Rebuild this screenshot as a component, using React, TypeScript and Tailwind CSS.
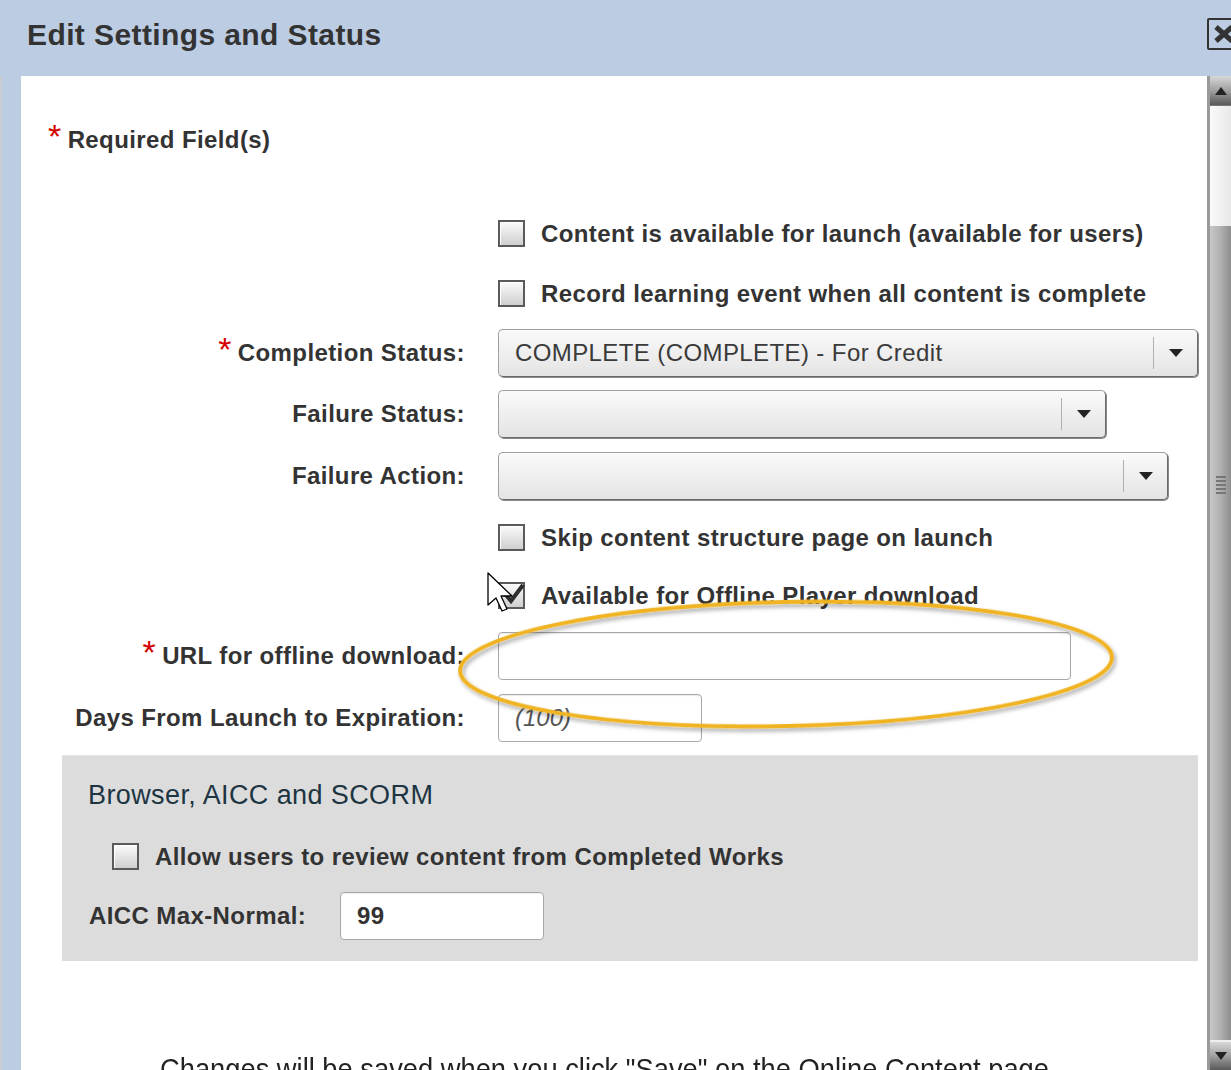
import React from "react";

const font = { fontFamily: '"Liberation Sans", Arial, sans-serif' };

function Checkbox({ checked = false }: { checked?: boolean }) {
  return (
    <div className="relative w-[27px] h-[27px] shrink-0 border-2 border-[#5a5a5a] bg-gradient-to-b from-[#fbfbfb] to-[#cfcfcf] shadow-[inset_1px_1px_0_#fff]">
      {checked && (
        <svg className="absolute left-[2px] top-[-2px]" width="24" height="24" viewBox="0 0 24 24">
          <path d="M4 13 L9 19 L21 3" fill="none" stroke="#2e2e2e" strokeWidth="4" strokeLinejoin="miter" />
        </svg>
      )}
    </div>
  );
}

function Select({ width, value = "" }: { width: string; value?: string }) {
  return (
    <div
      className={`${width} h-[48px] flex items-center rounded-[5px] border border-[#a0a0a0] border-b-[#6a6a6a] border-r-[#6a6a6a] bg-gradient-to-b from-[#fafafa] to-[#e4e4e4] shadow-[1px_1px_0_#8a8a8a]`}
    >
      <div className="flex-1 pl-[16px] text-[24px] tracking-[0.4px] text-[#3a3a3a] whitespace-nowrap overflow-hidden">{value}</div>
      <div className="w-[1px] h-[32px] bg-[#b0b0b0]" />
      <div className="w-[43px] flex items-center justify-center">
        <svg width="16" height="10" viewBox="0 0 16 10">
          <path d="M1 1 L15 1 L8 9 Z" fill="#222" />
        </svg>
      </div>
    </div>
  );
}

function TextInput({ width, children }: { width: string; children?: React.ReactNode }) {
  return (
    <div
      className={`${width} h-[48px] flex items-center rounded-[4px] border border-[#a8a8a8] bg-white shadow-[inset_0_1px_1px_rgba(0,0,0,0.08)]`}
    >
      {children}
    </div>
  );
}

function Star() {
  return (
    <span className="text-[#d40000] font-normal text-[34px] leading-[20px] h-[20px] mr-[6px] relative top-[-4px]">*</span>
  );
}

function Label({ children, req = false }: { children: React.ReactNode; req?: boolean }) {
  return (
    <div className="w-[444px] shrink-0 flex justify-end items-center text-[24px] tracking-[0.4px] leading-[28px] font-bold text-[#333] whitespace-nowrap">
      {req && <Star />}
      <span>{children}</span>
    </div>
  );
}

function CheckRow({ label, checked = false, mt }: { label: string; checked?: boolean; mt: string }) {
  return (
    <div className={`flex items-center h-[27px] ${mt}`}>
      <div className="w-[444px] shrink-0" />
      <div className="ml-[33px] flex items-center gap-[16px] text-[24px] tracking-[0.4px] leading-[27px] font-bold text-[#333] whitespace-nowrap">
        <Checkbox checked={checked} />
        <span>{label}</span>
      </div>
    </div>
  );
}

export default function App() {
  return (
    <div className="relative w-[1231px] h-[1070px] overflow-hidden bg-[#bccde3]" style={font}>
      {/* header */}
      <div className="h-[76px] flex items-center pl-[27px]">
        <div className="text-[30px] tracking-[0.4px] font-bold text-[#333] leading-none pb-[6px]">Edit Settings and Status</div>
        <div className="ml-auto mr-[-12px] mb-[8px] w-[36px] h-[32px] border-2 border-[#333] rounded-[2px] flex items-center justify-start pl-[4px]">
          <svg width="22" height="20" viewBox="0 0 22 20">
            <path d="M3 3 L19 17 M19 3 L3 17" stroke="#333" strokeWidth="5" />
          </svg>
        </div>
      </div>

      {/* body */}
      <div className="flex h-[994px]">
        <div className="w-[21px] shrink-0 border-l-2 border-[#c9ccd0]" />
        <div className="w-[1186px] shrink-0 bg-white relative">
          <div className="pt-[50px] pl-[27px] flex items-center text-[24px] tracking-[0.4px] leading-[28px] font-bold text-[#333] h-[28px] box-content">
            <Star />
            <span>Required Field(s)</span>
          </div>

          <div className="flex flex-col">
            <CheckRow mt="mt-[66px]" label="Content is available for launch (available for users)" />
            <CheckRow mt="mt-[33px]" label="Record learning event when all content is complete" />
            <div className="flex items-center mt-[22px]">
              <Label req>Completion Status:</Label>
              <div className="ml-[33px]">
                <Select width="w-[700px]" value="COMPLETE (COMPLETE) - For Credit" />
              </div>
            </div>
            <div className="flex items-center mt-[13px]">
              <Label>Failure Status:</Label>
              <div className="ml-[33px]">
                <Select width="w-[608px]" />
              </div>
            </div>
            <div className="flex items-center mt-[14px]">
              <Label>Failure Action:</Label>
              <div className="ml-[33px]">
                <Select width="w-[670px]" />
              </div>
            </div>
            <CheckRow mt="mt-[24px]" label="Skip content structure page on launch" />
            <CheckRow mt="mt-[31px]" label="Available for Offline Player download" checked />
            <div className="flex items-center mt-[23px]">
              <Label req>URL for offline download:</Label>
              <div className="ml-[33px]">
                <TextInput width="w-[573px]" />
              </div>
            </div>
            <div className="flex items-center mt-[14px]">
              <Label>Days From Launch to Expiration:</Label>
              <div className="ml-[33px]">
                <TextInput width="w-[204px]">
                  <span className="pl-[16px] text-[24px] italic text-[#555]">(100)</span>
                </TextInput>
              </div>
            </div>
          </div>

          {/* gray section */}
          <div className="ml-[41px] mt-[13px] w-[1136px] bg-[#dcdcdc] pt-[24px] pb-[21px] border-t border-[#e6e6e6]">
            <div className="pl-[26px] text-[27px] tracking-[0.4px] leading-[30px] text-[#1d3542]">Browser, AICC and SCORM</div>
            <div className="mt-[33px] pl-[50px] flex items-center h-[27px] gap-[16px] text-[24px] tracking-[0.4px] leading-[27px] font-bold text-[#333] whitespace-nowrap">
              <Checkbox />
              <span>Allow users to review content from Completed Works</span>
            </div>
            <div className="mt-[22px] pl-[27px] flex items-center text-[24px] tracking-[0.4px] leading-[28px] font-bold text-[#333]">
              <div className="w-[251px] whitespace-nowrap">AICC Max-Normal:</div>
              <TextInput width="w-[204px]">
                <span className="pl-[16px] text-[24px] font-bold text-[#333]">99</span>
              </TextInput>
            </div>
          </div>

          <div className="mt-[93px] pl-[139px] whitespace-nowrap">
            <div className="inline-block text-[30px] leading-[30px] text-[#222] origin-left scale-x-[0.91]">
              Changes will be saved when you click "Save" on the Online Content page.
            </div>
          </div>
        </div>

        {/* scrollbar */}
        <div className="w-[24px] shrink-0 flex flex-col border-l-[3px] border-[#9a9a9a]">
          <div className="h-[30px] bg-gradient-to-b from-[#d8d8d8] via-[#a0a0a0] to-[#5a5a5a] flex items-center justify-center border-b border-[#777]">
            <svg width="14" height="10" viewBox="0 0 14 10"><path d="M7 1 L13 9 L1 9 Z" fill="#222" /></svg>
          </div>
          <div className="h-[120px] bg-gradient-to-r from-[#fafafa] to-[#e8e8e8]" />
          <div className="flex-1 bg-gradient-to-r from-[#c8c8c8] via-[#b0b0b0] to-[#8e8e8e] flex flex-col items-center pt-[250px]">
            <div className="flex flex-col gap-[2px]">
              <div className="w-[10px] h-[2px] bg-[#777]" />
              <div className="w-[10px] h-[2px] bg-[#777]" />
              <div className="w-[10px] h-[2px] bg-[#777]" />
              <div className="w-[10px] h-[2px] bg-[#777]" />
              <div className="w-[10px] h-[2px] bg-[#777]" />
            </div>
          </div>
          <div className="h-[2px] bg-[#eee]" />
          <div className="h-[28px] bg-gradient-to-b from-[#d8d8d8] via-[#a0a0a0] to-[#5a5a5a] flex items-center justify-center">
            <svg width="14" height="10" viewBox="0 0 14 10"><path d="M1 1 L13 1 L7 9 Z" fill="#222" /></svg>
          </div>
        </div>
      </div>

      {/* annotation ellipse */}
      <svg className="absolute left-[440px] top-[585px] pointer-events-none" width="700" height="160" viewBox="0 0 700 160">
        <defs>
          <filter id="sh" x="-10%" y="-30%" width="120%" height="160%">
            <feDropShadow dx="2" dy="3" stdDeviation="2" floodColor="#000" floodOpacity="0.35" />
          </filter>
        </defs>
        <ellipse cx="346" cy="79" rx="326" ry="62" transform="rotate(-1.2 346 79)" fill="none" stroke="#f0b323" strokeWidth="4" filter="url(#sh)" />
      </svg>

      {/* mouse cursor */}
      <svg className="absolute left-[487px] top-[572px] pointer-events-none" width="30" height="44" viewBox="0 0 30 44">
        <path d="M1 1 L1 33 L9 26 L15 39 L20 37 L14 24 L25 24 Z" fill="#fff" stroke="#000" strokeWidth="1.3" strokeLinejoin="round" />
      </svg>
    </div>
  );
}
